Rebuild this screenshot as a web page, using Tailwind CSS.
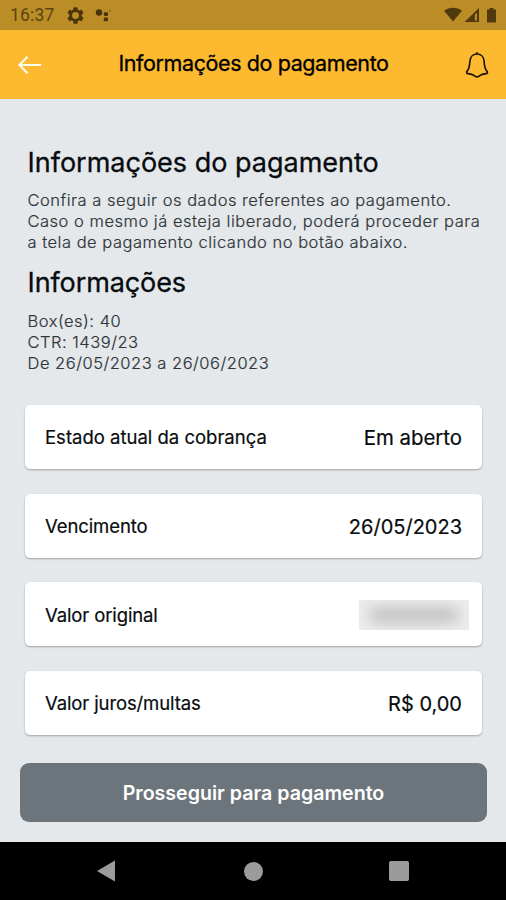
<!DOCTYPE html>
<html lang="pt-BR">
<head>
<meta charset="utf-8">
<title>Informações do pagamento</title>
<script src="https://cdn.jsdelivr.net/npm/@tailwindcss/browser@4"></script>
</head>
<body class="w-[506px] h-[900px] overflow-hidden flex flex-col bg-[#e4e8eb] font-[Inter,sans-serif] text-[#080c0f]">
  <div class="h-[30px] shrink-0 bg-[#bb8d26] flex items-center pl-[10px] pr-[8px] text-[#5a4312]">
    <span class="font-[Roboto,sans-serif] text-[17.500px] leading-[30px] tracking-[0.200px] w-[57px]">16:37</span>
    <svg class="w-[17px] h-[17px] text-[#4a350b]" viewBox="2 2 20 20" fill="currentColor"><path fill-rule="evenodd" d="M19.14 12.94c.04-.3.06-.61.06-.94s-.02-.64-.07-.94l2.03-1.58a.5.5 0 0 0 .12-.61l-1.92-3.32a.5.5 0 0 0-.59-.22l-2.39.96a7 7 0 0 0-1.62-.94l-.36-2.54A.5.5 0 0 0 13.920 2.400h-3.840a.5.5 0 0 0-.47.410l-.36 2.540c-.59.240-1.130.570-1.620.940l-2.390-.960a.5.5 0 0 0-.590.220L2.740 8.870a.5.5 0 0 0 .120.610l2.030 1.580c-.050.300-.090.630-.090.940s.020.640.070.940l-2.030 1.580a.5.5 0 0 0-.120.610l1.920 3.320c.120.220.370.290.590.220l2.390-.960c.500.380 1.030.700 1.620.940l.360 2.540c.050.240.240.410.480.410h3.840c.240 0 .440-.170.470-.410l.360-2.540c.590-.240 1.130-.560 1.620-.940l2.390.960c.220.080.470 0 .590-.220l1.920-3.320a.5.5 0 0 0-.120-.610zM12 16a4 4 0 1 1 0-8 4 4 0 0 1 0 8z"/></svg>
    <svg class="w-[16px] h-[14px] ml-[11px] text-[#4a350b]" viewBox="0 0 16 14" fill="currentColor"><circle cx="4" cy="4.500" r="3.200"/><rect x="8.800" y="4.300" width="4.200" height="3.800" rx="1"/><rect x="8.800" y="9.500" width="4.200" height="3.800" rx="1"/><circle cx="14.800" cy="2.800" r=".8" opacity=".7"/></svg>
    <svg class="w-[54px] h-[18px] ml-auto text-[#503a0d]" viewBox="0 0 54 18" fill="currentColor"><path d="M0 4.800C5 .6 13 .6 18 4.800L9 15.500z"/><path fill-rule="evenodd" d="M35 2v14H20.500zM33 6.500 30.800 9v5.500H33z"/><path d="M45.500 2h4v1.500h2.500V16.500h-9V3.500h2.500z"/></svg>
  </div>
  <header class="h-[69px] shrink-0 bg-[#fdba31] flex items-center justify-between pl-[18px] pr-[17px]">
    <svg class="w-[24px] h-[20px] text-[#fffdf0]" viewBox="0 0 24 20" fill="none" stroke="currentColor" stroke-width="2"><path d="M23 10H1.500M9.500 1.800 1.300 10l8.200 8.200"/></svg>
    <h1 class="text-[21.500px] leading-[28px] pb-[3px] tracking-[-0.400px] text-black [-webkit-text-stroke:0.300px_black]">Informações do pagamento</h1>
    <svg class="w-[24px] h-[28px] text-[#1d1603]" viewBox="0 0 24 28" fill="none" stroke="currentColor" stroke-width="1.700" stroke-linejoin="round" stroke-linecap="round"><path d="M12 1.800v1M12 3C8 3 5.200 6 4.900 10.200 4.600 15.500 4 18 2.300 19.800c-1.200 1.300-.8 2.700.8 2.900 2.200.3 4.400.6 5.700 1.600 1 .9 2 1.500 3.200 1.500s2.200-.6 3.200-1.500c1.300-1 3.500-1.300 5.700-1.600 1.600-.2 2-1.600.8-2.900C20 18 19.400 15.500 19.100 10.200 18.800 6 16 3 12 3z"/></svg>
  </header>
  <main class="h-[743px] shrink-0 flex flex-col pt-[47px]">
    <section class="pl-[27.500px]">
      <h2 class="text-[27px] leading-[34px] [-webkit-text-stroke:0.300px_#080c0f]">Informações do pagamento</h2>
      <p class="mt-[10px] text-[16.500px] leading-[21px] font-light text-[#30363a] tracking-[0.510px] whitespace-nowrap [-webkit-text-stroke:0.200px_#30363a]">Confira a seguir os dados referentes ao pagamento.<br>Caso o mesmo já esteja liberado, poderá proceder para<br>a tela de pagamento clicando no botão abaixo.</p>
      <h2 class="mt-[13px] text-[27px] leading-[34px] tracking-[-0.100px] [-webkit-text-stroke:0.300px_#080c0f]">Informações</h2>
      <p class="mt-[11px] text-[16.500px] leading-[21px] font-light text-[#30363a] tracking-[0.510px] whitespace-nowrap [-webkit-text-stroke:0.200px_#30363a]">Box(es): 40<br>CTR: 1439/23<br>De 26/05/2023 a 26/06/2023</p>
    </section>
    <section class="mt-[31px] ml-[25px] w-[457px] flex flex-col gap-[24.700px]">
      <div class="h-[64px] bg-white rounded-[5px] shadow-[0_1px_2px_rgba(0,0,0,0.3)] flex items-center justify-between px-[20px] pt-[2px]"><span class="text-[18.500px] [-webkit-text-stroke:0.200px_#080c0f]">Estado atual da cobrança</span><span class="text-[20.400px] [-webkit-text-stroke:0.200px_#080c0f]">Em aberto</span></div>
      <div class="h-[64px] bg-white rounded-[5px] shadow-[0_1px_2px_rgba(0,0,0,0.3)] flex items-center justify-between px-[20px] pt-[2px]"><span class="text-[18.500px] tracking-[-0.100px] [-webkit-text-stroke:0.200px_#080c0f]">Vencimento</span><span class="text-[20px] [-webkit-text-stroke:0.200px_#080c0f]">26/05/2023</span></div>
      <div class="h-[64px] bg-white rounded-[5px] shadow-[0_1px_2px_rgba(0,0,0,0.3)] flex items-center justify-between pl-[20px] pr-[13px] pt-[2px]"><span class="text-[18.500px] tracking-[-0.120px] [-webkit-text-stroke:0.200px_#080c0f]">Valor original</span><span class="w-[110px] h-[30px] overflow-hidden bg-[#ededed] flex items-center justify-center"><span class="w-[88px] h-[16px] bg-[#c2c2c2] blur-[7px]"></span></span></div>
      <div class="h-[64px] bg-white rounded-[5px] shadow-[0_1px_2px_rgba(0,0,0,0.3)] flex items-center justify-between px-[20px] pt-[2px]"><span class="text-[18.500px] tracking-[-0.120px] [-webkit-text-stroke:0.200px_#080c0f]">Valor juros/multas</span><span class="text-[20px] [-webkit-text-stroke:0.200px_#080c0f]">R$ 0,00</span></div>
    </section>
    <button class="mt-[28px] ml-[20px] w-[467px] h-[59px] pt-[2px] rounded-[9px] bg-[#6c757b] text-white font-semibold text-[19.600px]">Prosseguir para pagamento</button>
  </main>
  <nav class="h-[58px] shrink-0 bg-black flex items-center justify-between pl-[96px] pr-[97px]">
    <svg class="w-[20px] h-[22px]" viewBox="0 0 20 22" fill="#9b9b9b"><path d="M19 .5v21L1 11z"/></svg>
    <span class="size-[19px] ml-[2px] rounded-full bg-[#9b9b9b]"></span>
    <span class="size-[20px] rounded-[2px] bg-[#9b9b9b]"></span>
  </nav>
</body>
</html>
